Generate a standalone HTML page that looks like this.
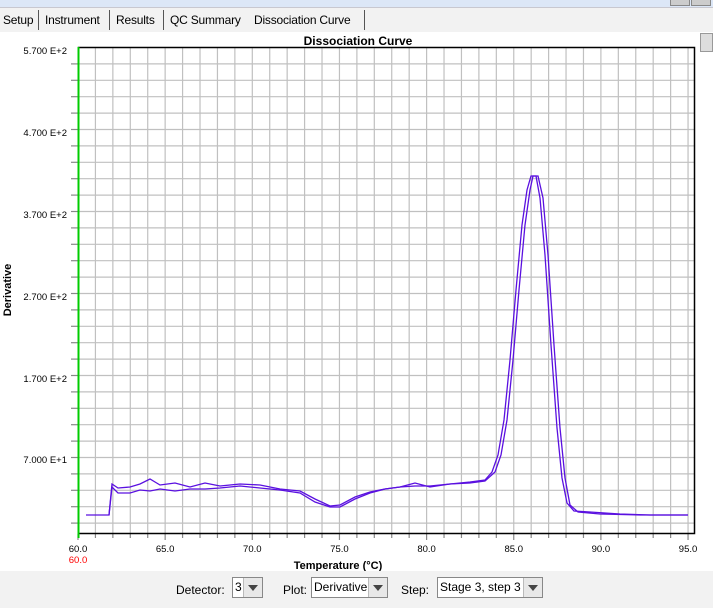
<!DOCTYPE html>
<html><head><meta charset="utf-8"><style>
body{margin:0;width:713px;height:608px;overflow:hidden;background:#fff;font-family:"Liberation Sans",sans-serif;position:relative}
.top{position:absolute;left:0;top:0;width:713px;height:7px;background:#dce7f7;border-bottom:1px solid #c8c8d0}
.tabs{position:absolute;left:0;top:8px;width:713px;height:24px;background:#f2f2f2}
.tab{position:absolute;top:3px;font-size:12px;color:#000;height:18px;line-height:18px;letter-spacing:-0.2px}
.sep{position:absolute;top:2px;width:1px;height:20px;background:#555}
.bot{position:absolute;left:0;top:571px;width:713px;height:37px;background:#f2f2f2;font-size:12px}
.lbl{position:absolute;top:12px}
.sel{position:absolute;top:6px;height:21px;border:1px solid #888;background:#fff;box-sizing:border-box;line-height:19px;padding-left:2px;overflow:hidden;white-space:nowrap}
.arr{position:absolute;right:0;top:0;width:18px;height:19px;background:#e8e8e8;border-left:1px solid #bbb}
.arr:after{content:"";position:absolute;left:4px;top:7px;border-left:5px solid transparent;border-right:5px solid transparent;border-top:6px solid #444}
</style></head><body>
<div class="top"></div>
<div style="position:absolute;left:670px;top:0;width:18px;height:5px;background:#ccc;border:1px solid #888;border-top:none"></div>
<div style="position:absolute;left:691px;top:0;width:18px;height:5px;background:#ccc;border:1px solid #888;border-top:none"></div>
<div class="tabs">
<span class="tab" style="left:3px">Setup</span><div class="sep" style="left:38px"></div>
<span class="tab" style="left:45px">Instrument</span><div class="sep" style="left:109px"></div>
<span class="tab" style="left:116px">Results</span><div class="sep" style="left:163px"></div>
<span class="tab" style="left:170px">QC Summary</span>
<span class="tab" style="left:254px">Dissociation Curve</span><div class="sep" style="left:364px"></div>
</div>
<div style="position:absolute;left:700px;top:33px;width:13px;height:19px;background:#ddd;border:1px solid #999;box-sizing:border-box"></div>
<svg style="position:absolute;left:0;top:32px" width="713" height="540" viewBox="0 32 713 540" font-family="Liberation Sans,sans-serif">
<g id="grid" stroke="#c0c0c0" stroke-width="1.2"></g>
<text x="358" y="45" font-size="12" font-weight="bold" text-anchor="middle">Dissociation Curve</text>
<g font-size="9.5" text-anchor="end">
<text x="67" y="54">5.700 E+2</text><text x="67" y="136">4.700 E+2</text><text x="67" y="218">3.700 E+2</text>
<text x="67" y="300">2.700 E+2</text><text x="67" y="382">1.700 E+2</text><text x="67" y="463">7.000 E+1</text>
</g>
<text transform="translate(11,290) rotate(-90)" font-size="11" font-weight="bold" text-anchor="middle">Derivative</text>
<g id="xt" font-size="9.5" text-anchor="middle"></g>
<text x="78" y="563" font-size="9.5" fill="#f00" text-anchor="middle">60.0</text>
<text x="338" y="569" font-size="11" font-weight="bold" text-anchor="middle">Temperature (°C)</text>
<rect x="78.5" y="47.5" width="616" height="486" fill="none" stroke="#000" stroke-width="1.5"/>
<line x1="78.5" y1="47" x2="78.5" y2="538" stroke="#00cc00" stroke-width="2"/>
<polyline fill="none" stroke="#5a10e0" stroke-width="1.3" points="86,515 109,515 112,484 118,488 130,487 140,484 150,479 160,485 175,483 190,487 205,483 220,486 240,484 260,485 280,489 300,491 315,499 330,506 340,505 355,497 370,492 385,489 400,487 415,483 430,487 450,484 470,482 485,480 492,472 498,455 504,420 510,360 516,290 522,225 527,190 531,176 536,176 540,198 545,255 551,345 557,428 562,478 567,503 574,511 590,512 620,514 650,515 688,515"/>
<polyline fill="none" stroke="#5a10e0" stroke-width="1.3" points="109,515 112,487 118,493 130,493 140,490 150,491 160,489 175,491 190,489 205,489 220,488 240,486 260,488 280,490 300,493 315,502 330,507 340,507 355,499 370,493 385,489 400,487 415,486 430,486 450,484 470,483 485,481 495,472 501,455 507,420 513,360 519,290 525,225 530,190 533,176 538,176 543,198 548,255 554,345 560,428 565,478 570,505 578,512 600,514 640,515 688,515"/>
</svg>
<div class="bot">
<span class="lbl" style="left:176px">Detector:</span>
<div class="sel" style="left:232px;width:31px">3<div class="arr"></div></div>
<span class="lbl" style="left:283px">Plot:</span>
<div class="sel" style="left:311px;width:77px">Derivative<div class="arr"></div></div>
<span class="lbl" style="left:401px">Step:</span>
<div class="sel" style="left:437px;width:106px">Stage 3, step 3<div class="arr"></div></div>
</div>
<script>
var g=document.getElementById('grid'),xt=document.getElementById('xt'),s='';
for(var k=1;k<=35;k++){var x=78+k*17.43;s+='<line x1="'+x+'" y1="47" x2="'+x+'" y2="534"/>';}
for(var j=1;j<30;j++){var y=47.5+j*16.4;s+='<line x1="78" y1="'+y+'" x2="695" y2="'+y+'"/><line x1="71" y1="'+y+'" x2="78" y2="'+y+'" stroke="#888"/>';}
for(var k=0;k<=35;k++){var x=78+k*17.43;s+='<line x1="'+x+'" y1="534" x2="'+x+'" y2="'+(k%5?538:540)+'" stroke="#888"/>';}
g.innerHTML=s;var t='';
for(var k=0;k<=7;k++){t+='<text x="'+(78+k*5*17.43)+'" y="552">'+(60+k*5)+'.0</text>';}
xt.innerHTML=t;
</script>
</body></html>
